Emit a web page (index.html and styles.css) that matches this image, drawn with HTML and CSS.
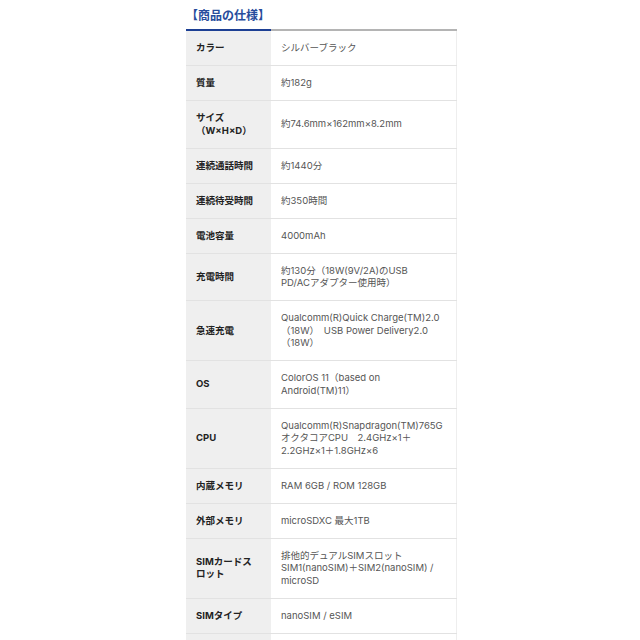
FILE: index.html
```
<!DOCTYPE html>
<html lang="ja">
<head>
    <meta charset="UTF-8">
    <meta name="viewport" content="width=device-width, initial-scale=1.0">
    <title>商品の仕様</title>
    <link rel="stylesheet" href="styles.css">
</head>
<body>
    <div class="spec">
        <h2 class="spec-title">【商品の仕様】</h2>
        <table class="spec-table">
            <tr><th>カラー</th><td>シルバーブラック</td></tr>
            <tr><th>質量</th><td>約182g</td></tr>
            <tr><th>サイズ<br>（W×H×D）</th><td>約74.6mm×162mm×8.2mm</td></tr>
            <tr><th>連続通話時間</th><td>約1440分</td></tr>
            <tr><th>連続待受時間</th><td>約350時間</td></tr>
            <tr><th>電池容量</th><td>4000mAh</td></tr>
            <tr><th>充電時間</th><td>約130分（18W(9V/2A)のUSB<br>PD/ACアダプター使用時）</td></tr>
            <tr><th>急速充電</th><td>Qualcomm(R)Quick Charge(TM)2.0<br>（18W）　USB Power Delivery2.0<br>（18W）</td></tr>
            <tr><th>OS</th><td>ColorOS 11（based on<br>Android(TM)11）</td></tr>
            <tr><th>CPU</th><td>Qualcomm(R)Snapdragon(TM)765G<br>オクタコアCPU　2.4GHz×1＋<br>2.2GHz×1＋1.8GHz×6</td></tr>
            <tr><th>内蔵メモリ</th><td>RAM 6GB / ROM 128GB</td></tr>
            <tr><th>外部メモリ</th><td>microSDXC 最大1TB</td></tr>
            <tr><th>SIMカードス<br>ロット</th><td>排他的デュアルSIMスロット<br>SIM1(nanoSIM)＋SIM2(nanoSIM) /<br>microSD</td></tr>
            <tr><th>SIMタイプ</th><td>nanoSIM / eSIM</td></tr>
            <tr><th>防水/防塵</th><td>IPX8 / IP6X</td></tr>
        </table>
    </div>
</body>
</html>
```

FILE: styles.css
```
body {
    margin: 0;
    background-color: #ffffff;
    font-family: Inter, "Noto Sans CJK JP", sans-serif;
}
.spec {
    width: 271px;
    margin-left: 186px;
    padding-top: 8px;
}
.spec-title {
    margin: 0 0 7px 0;
    font-size: 12px;
    line-height: 14px;
    font-weight: bold;
    color: #274c9c;
    font-family: "Noto Sans CJK JP", sans-serif;
}
.spec-table {
    width: 100%;
    border-collapse: collapse;
    border-top: 2px solid #b4b4b4;
    border-right: 1px solid #eeeeee;
    font-size: 9.5px;
    line-height: 12.5px;
}
.spec-table tr:first-child th {
    border-top: 2px solid #1c3f94;
}
.spec-table th,
.spec-table td {
    padding: 11px 10px 10.5px;
    border-bottom: 1px solid #e2e2e2;
    text-align: left;
    vertical-align: middle;
}
.spec-table th {
    width: 65px;
    background-color: #efefef;
    color: #222222;
    font-weight: bold;
}
.spec-table td {
    color: #555555;
    font-weight: normal;
}
```
